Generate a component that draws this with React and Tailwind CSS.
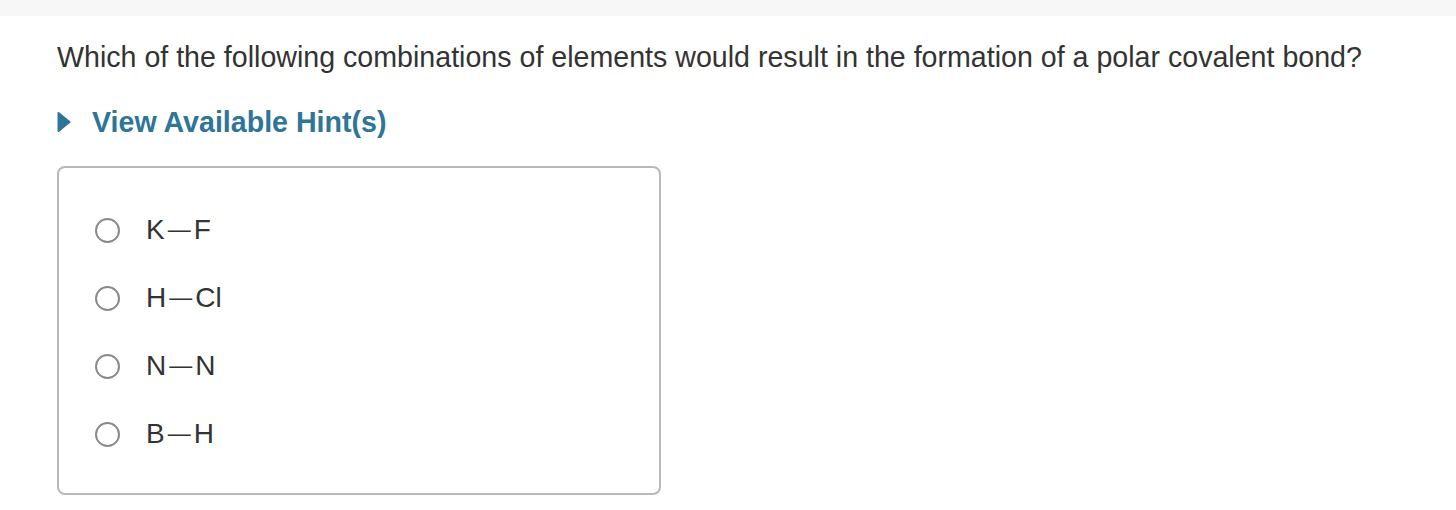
import React from 'react'

const options = [
  ['K', 'F'],
  ['H', 'Cl'],
  ['N', 'N'],
  ['B', 'H'],
]

function Option({ left, right }) {
  return (
    <label className="flex items-center h-[68px]">
      <span className="w-[25px] h-[25px] rounded-full border-2 border-[#8a8a8a] bg-white shrink-0" />
      <span className="ml-[26px] text-[28px] leading-none text-[#333333] flex items-center">
        {left}
        <span className="text-[23px] mx-[3px] relative top-[-1px]">—</span>
        {right}
      </span>
    </label>
  )
}

export default function App() {
  return (
    <div className="min-h-[510px] bg-white font-['Liberation_Sans',Arial,sans-serif]">
      <div className="h-[16px] bg-[#f7f7f7]" />
      <div className="px-[57px] pt-[24px]">
        <p className="text-[28.6px] leading-[34px] text-[#333333]">
          Which of the following combinations of elements would result in the formation of a polar covalent bond?
        </p>
        <div className="flex items-center mt-[30px] h-[36px]">
          <svg width="14" height="22" viewBox="0 0 14 22">
            <path d="M1.5 2 L12.5 11 L1.5 20 Z" fill="#2e7598" stroke="#2e7598" strokeWidth="2" strokeLinejoin="round" />
          </svg>
          <span className="ml-[21px] text-[28.6px] font-bold text-[#2e7598]">View Available Hint(s)</span>
        </div>
        <div className="mt-[26px] w-[604px] h-[329px] border-2 border-[#b9b9b9] rounded-[8px] pl-[36px] pt-[28px]">
          {options.map(([l, r], i) => (
            <Option key={i} left={l} right={r} />
          ))}
        </div>
      </div>
    </div>
  )
}
